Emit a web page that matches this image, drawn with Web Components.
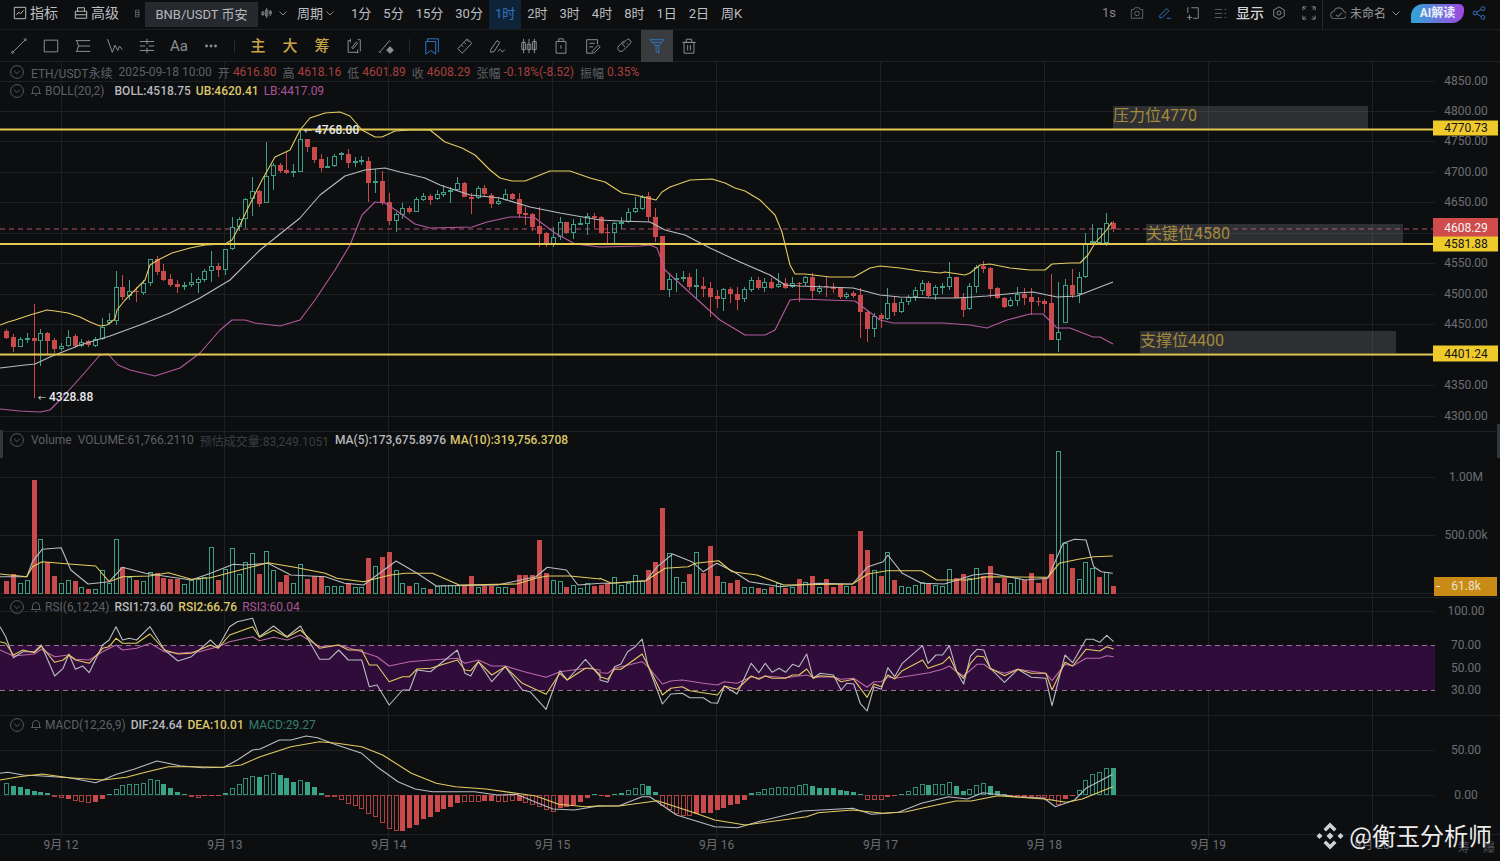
<!DOCTYPE html>
<html>
<head>
<meta charset="utf-8">
<title>ETH/USDT</title>
<style>
html, body { margin: 0; background: #0d0e10; overflow: hidden; }
</style>
</head>
<body>
<kline-app></kline-app>
<script>
var FONT = '"Roboto", "Noto Sans CJK SC", sans-serif';
var GRID = "#1e2023";
var UP = "#3f9e86";
var DOWN = "#c84a4b";
var WHITE = "#b9bcc2";
var YELLOW = "#e3cc63";
var PINK = "#b35a9f";

// candle positions, every bar is one hour
var barX = k => 6.33 + 6.83 * k;

// top, bottom, high, low in page pixels
var CANDLES = `r331,338,329,339 r337,347,334,352 g339,347,337,347 g338,340,333,343 r338,341,304,398 g333,341,329,366 r333,341,332,354 r340,349,338,353 g346,349,343,351 g337,346,330,347
r336,346,334,348 g342,346,339,347 r341,345,340,347 g339,346,337,347 g327,339,318,340 g320,323,313,325 g287,321,271,325 r287,297,275,300 g291,296,280,300 r291,292,287,302
g283,293,280,295 g259,283,259,286 r259,272,256,275 r271,280,264,281 r279,285,274,287 r284,287,280,293 g285,287,282,290 g282,285,273,287 g279,283,277,293 g271,280,269,282
g266,271,251,282 r266,270,263,277 g249,270,249,275 g227,249,217,250 g219,227,217,231 g199,219,198,228 g191,199,177,216 r191,204,190,207 g176,203,142,203 g165,176,163,190
r165,171,163,173 r170,173,152,174 g171,173,164,177 g139,172,130,172 r139,147,139,152 r147,160,147,163 r159,168,154,172 g166,167,157,168 g156,166,154,167 g153,155,152,160
r154,163,149,168 g161,162,157,167 g160,162,156,165 r161,183,157,202 g181,182,169,193 r181,203,171,205 r202,221,193,225 g214,221,212,232 g208,215,203,219 r208,212,206,214
g199,212,197,212 g196,200,193,201 r196,200,194,205 g194,199,190,200 g192,195,185,197 g190,191,187,203 g183,190,177,191 r183,197,182,197 r197,199,193,214 g188,198,186,199
r188,194,185,197 r195,204,193,208 g201,204,197,205 g194,200,189,201 r194,199,193,200 r199,214,193,218 r213,215,207,225 r214,227,213,231 r226,234,207,247 r233,243,232,247
g237,244,227,247 g222,237,217,240 r222,233,222,234 g224,233,219,239 g223,224,218,225 g216,224,213,235 r216,218,213,228 r217,233,216,234 r232,233,224,243 g223,233,222,245
g222,223,217,229 g212,222,208,223 g208,212,197,213 g197,209,195,210 r196,217,192,222 r217,237,208,242 r236,290,236,290 g279,290,273,297 g278,279,273,292 g277,278,271,282
r277,287,273,290 g285,287,269,298 r286,289,277,297 r288,297,282,317 r296,299,290,308 g289,299,288,311 r289,294,287,303 r294,300,287,310 g289,299,287,302 g280,290,277,292
r280,288,277,290 g282,288,278,292 r282,288,278,289 g284,287,273,288 r283,288,278,289 g283,287,277,288 r283,284,282,302 g277,283,276,286 r277,291,273,299 g288,292,285,294
r286,287,277,297 r287,289,283,293 r288,297,287,299 g294,297,292,299 r293,296,291,298 r295,312,288,338 r312,329,311,342 g316,329,313,337 r315,319,313,328 g303,319,288,320
r303,312,297,316 g302,312,298,313 g297,302,295,305 g290,297,287,301 g283,291,280,295 r283,296,281,297 g287,295,285,300 g286,287,283,294 g277,287,262,290 r277,298,277,298
r297,310,293,317 g286,309,283,310 g267,287,265,293 r266,269,261,273 r268,289,267,298 r288,298,287,299 r298,307,297,308 g300,306,297,307 g294,301,287,306 r294,298,288,305
r297,302,288,315 r301,302,297,306 r301,304,299,313 r303,340,274,340 g332,340,282,352 g285,323,279,323 r285,295,269,298 g277,294,272,303 g243,277,233,278 g241,243,224,245
g228,243,228,245 g223,243,213,246 r223,229,221,232`.trim().split(/\s+/);

// volume bar tops, read in crop units: minus is a falling bar
var VOLUMES = [-452,-432,460,450,-150,328,-397,-438,460,450,-453,470,-477,478,420,460,328,-412,440,-450,453,425,-430,-445,-447,-447,462,450,448,440,352,-450,418,355,432,397,368,-432,362,420,-456,-435,460,403,-447,-437,-437,467,467,467,-458,470,470,-385,408,-381,-366,420,458,-468,460,475,-477,468,464,465,465,-468,-438,470,-467,-467,470,470,-473,-435,-435,-435,-330,-430,450,453,-470,465,475,460,-467,
-465,-458,442,465,460,436,452,-420,-397,-235,370,442,455,-432,365,-430,-348,-438,455,-458,-450,470,470,-475,478,-470,458,-473,470,-447,457,-438,470,-447,-470,-462,468,-468,-303,-360,420,-437,365,-450,467,472,465,457,-460,465,467,418,-445,-432,445,415,-437,-407,-458,-445,460,445,-450,-430,-458,-447,-372,63,340,-415,448,397,415,-440,425,-467];

// macd bar tips, h is a hollow bar
var MACD = `203h 213 217 222 228 231 235 243h 248h 253 258h 260h 263h 260 252 237 222h 211h 208h 206h 204h 193h 194h 207 218 231 237 243h 248h 243 243 243 235 220h 208h 190h 184h 187 179h 175h 180 190 202 196h 201 215 234 245h 247h 255h 266h 272h 283h 296h 305h 325h 343h 347h 347 340 330 313 305 290 283 275 265 262h 260h 260h 258 258 260h 260h 258h 258 265h 270h 275h 285h 292h 278 275 270 262 250 236
243 245 238 234 226h 220h 208h 214 231 272h 285h 298h 303h 303h 296 295 293 286 280 270 267 255 234 232h 223h 220h 217h 217h 216h 211h 208h 214 218 219 220 226 229 232 238 256h 256h 256h 246 243 236 227h 216h 208h 211 208h 208h 202h 213 228 222h 210h 204h 213 228 237 242 244 245 246h 248h 250h 255h 270h 252 243 226h 196h 178h 171h 159h 159`.trim().split(/\s+/);

var BOLL_UP = [[0,325],[8,322],[15,320],[30,315],[47,310],[55,311],[68,313],[80,317],[90,322],[100,326],[107,325],[115,319],[117,310],[125,300],[135,290],[145,280],[150,265],[158,260],[172,253],[190,248],[205,245],[225,244],[232,240],[240,225],[248,208],[262,180],[275,157],[290,150],[300,130],[310,118],[325,113],[340,112],[350,116],[362,130],[375,137],[382,137],[395,131],[410,130],[430,130],[445,142],[462,148],[475,155],[490,170],[500,178],[512,181],[525,181],[540,175],[550,171],[570,171],[590,178],[605,182],[622,193],[635,195],[652,199],[656,200],[662,192],[670,187],[690,180],[712,179],[725,183],[735,188],[745,191],[760,200],[775,215],[782,232],[790,265],[795,274],[805,274],[830,277],[854,277],[870,268],[880,266],[900,268],[920,271],[940,273],[945,272],[965,275],[970,273],[980,265],[990,264],[1010,268],[1030,270],[1045,270],[1052,264],[1070,263],[1080,263],[1088,255],[1095,243],[1105,232],[1112,222]];
var BOLL_MID = [[0,368],[25,365],[35,364],[50,357],[80,345],[110,336],[140,325],[170,313],[200,298],[230,280],[260,250],[285,230],[300,218],[320,195],[345,176],[365,170],[385,168],[400,172],[425,178],[440,185],[470,195],[500,198],[530,207],[560,213],[600,220],[620,221],[650,222],[665,230],[685,235],[710,248],[740,262],[770,275],[785,285],[800,286],[853,288],[880,295],[900,297],[933,298],[957,298],[973,297],[987,296],[1017,293],[1033,292],[1057,297],[1077,296],[1100,287],[1113,282]];
var BOLL_LOW = [[0,409],[20,411],[40,412],[50,410],[60,400],[80,378],[100,355],[108,354],[118,365],[130,370],[155,376],[180,368],[200,353],[220,330],[232,320],[245,320],[255,323],[280,326],[300,320],[315,300],[335,270],[350,245],[362,215],[375,202],[385,203],[400,213],[415,224],[430,228],[472,227],[487,222],[510,217],[520,217],[535,218],[555,233],[575,244],[600,247],[640,246],[650,245],[657,248],[665,270],[700,302],[720,320],[745,335],[765,335],[775,330],[790,300],[800,299],[855,301],[880,320],[893,323],[943,323],[970,325],[987,328],[1007,320],[1030,314],[1043,314],[1057,328],[1070,328],[1093,337],[1100,337],[1113,344]];

// curves below were read from two crops, left half and right half
var crop = (left, right, top) => left.map(p => [p[0] / 2.613, top + p[1] / 3]).concat(right.map(p => [600 + p[0] / 2.613, top + p[1] / 3]));

var VOL_MA5 = crop([[0,440],[70,440],[85,395],[110,358],[160,353],[185,420],[230,462],[285,455],[320,412],[380,430],[440,440],[500,450],[550,430],[610,403],[640,405],[700,400],[760,435],[850,440],[900,460],[950,465],[1035,393],[1090,430],[1140,468],[1300,465],[1400,440],[1430,412],[1480,420],[1510,465],[1568,460]],
  [[0,460],[30,460],[120,452],[150,410],[190,372],[240,395],[270,425],[305,400],[350,425],[390,455],[470,470],[570,460],[660,462],[700,410],[740,395],[752,375],[790,430],[840,460],[900,462],[975,435],[1020,430],[1110,450],[1170,445],[1210,340],[1240,328],[1270,330],[1290,410],[1310,425],[1340,430]], 430);
var VOL_MA10 = crop([[0,432],[70,440],[85,410],[110,395],[180,402],[250,408],[285,455],[320,440],[390,438],[440,428],[500,448],[550,443],[610,425],[700,398],[770,412],[850,430],[880,445],[950,455],[1020,435],[1060,430],[1130,430],[1200,465],[1350,462],[1400,445],[1430,438],[1490,438],[1568,447]],
  [[0,445],[30,460],[120,452],[170,415],[230,410],[250,400],[310,392],[345,425],[410,435],[480,465],[660,462],[700,432],[750,422],[840,422],[880,450],[960,450],[1010,440],[1170,442],[1200,400],[1250,388],[1290,380],[1340,378]], 430);
var RSI1 = crop([[0,590],[15,620],[35,683],[60,665],[90,665],[108,645],[143,738],[165,715],[180,672],[197,718],[216,708],[233,728],[268,645],[285,630],[303,590],[320,630],[338,625],[357,630],[392,590],[430,660],[465,693],[500,680],[550,630],[570,652],[600,590],[620,575],[660,565],[678,620],[715,588],[750,620],[785,588],[835,688],[860,688],[885,660],[910,690],[945,690],[965,770],[985,765],[1017,825],[1052,780],[1070,780],[1090,720],[1125,725],[1195,660],[1215,730],[1230,738],[1250,695],[1285,755],[1320,710],[1365,780],[1385,785],[1427,838],[1463,722],[1482,750],[1530,688],[1568,740]],
  [[0,750],[20,757],[38,710],[55,702],[72,665],[92,650],[110,627],[125,705],[163,822],[185,792],[215,790],[235,803],[270,803],[290,818],[307,820],[325,768],[358,792],[395,700],[415,728],[432,700],[450,727],[468,715],[485,727],[503,703],[520,710],[540,672],[557,745],[575,730],[610,735],[630,780],[645,760],[663,762],[680,820],[698,843],[716,770],[735,778],[752,713],[770,740],[790,700],[843,647],[857,700],[878,675],[895,675],[913,647],[932,725],[950,762],[968,678],[985,658],[1003,660],[1020,715],[1057,757],[1092,718],[1127,742],[1165,745],[1181,827],[1215,675],[1235,698],[1270,628],[1288,628],[1306,637],[1324,616],[1342,635]], 430);
var RSI2 = crop([[0,635],[15,640],[35,675],[60,660],[90,668],[108,648],[143,697],[165,690],[180,675],[197,690],[233,700],[268,655],[285,650],[303,625],[320,640],[357,640],[392,612],[430,660],[465,672],[500,670],[550,645],[570,655],[600,615],[660,590],[678,622],[715,600],[750,622],[785,600],[835,655],[885,645],[910,660],[945,660],[965,705],[985,705],[1017,755],[1052,740],[1070,740],[1090,717],[1125,715],[1195,690],[1215,720],[1230,722],[1250,695],[1285,735],[1320,710],[1365,760],[1427,793],[1463,730],[1482,750],[1530,715],[1550,715],[1568,735]],
  [[0,740],[20,748],[38,718],[55,718],[110,672],[125,705],[163,795],[185,775],[215,770],[235,782],[307,795],[325,768],[358,778],[395,738],[415,748],[432,738],[450,745],[485,745],[503,735],[520,735],[540,717],[557,745],[575,737],[610,740],[630,755],[663,748],[698,802],[716,762],[735,770],[752,735],[770,747],[790,722],[843,690],[857,715],[895,700],[913,680],[932,725],[950,745],[968,700],[985,678],[1003,680],[1020,715],[1057,737],[1092,718],[1127,730],[1165,730],[1181,780],[1215,697],[1235,708],[1270,658],[1306,663],[1324,650],[1342,657]], 430);
var RSI3 = crop([[0,660],[35,678],[90,672],[108,658],[143,680],[180,675],[197,688],[233,690],[268,665],[303,645],[320,660],[357,655],[392,640],[430,665],[465,670],[520,665],[570,650],[600,635],[660,620],[678,632],[715,622],[750,630],[785,615],[835,650],[885,645],[945,665],[985,680],[1017,708],[1070,695],[1125,690],[1195,685],[1215,700],[1250,690],[1285,708],[1320,708],[1370,725],[1427,742],[1463,725],[1530,715],[1568,720]],
  [[0,728],[20,730],[38,715],[110,695],[125,710],[163,762],[185,753],[215,750],[270,760],[307,765],[325,755],[358,760],[395,740],[415,745],[432,738],[485,743],[540,735],[557,742],[610,740],[630,748],[663,745],[698,772],[716,755],[735,755],[752,740],[770,745],[860,728],[895,718],[913,708],[932,725],[950,738],[985,703],[1003,703],[1020,718],[1057,730],[1092,718],[1165,730],[1181,752],[1215,703],[1235,708],[1270,685],[1306,685],[1324,677],[1342,680]], 430);
var DIF = crop([[0,175],[20,172],[60,180],[100,182],[180,188],[250,203],[305,178],[350,163],[410,138],[470,152],[530,158],[585,157],[620,135],[660,105],[680,102],[730,75],[760,75],[800,63],[830,68],[880,90],[945,115],[985,155],[1040,200],[1085,222],[1130,230],[1170,230],[1240,230],[1300,240],[1350,238],[1400,262],[1445,282],[1500,285],[1568,272]],
  [[0,273],[50,272],[110,245],[130,245],[155,265],[200,300],[300,335],[360,338],[420,318],[530,288],[660,280],[710,298],[780,292],[840,265],[910,245],[960,252],[1000,233],[1090,245],[1160,250],[1190,275],[1240,255],[1270,220],[1340,178]], 715);
var DEA = crop([[0,195],[50,185],[110,177],[180,188],[270,195],[330,187],[380,172],[440,155],[500,155],[580,157],[630,150],[680,125],[760,95],[835,80],[880,85],[945,95],[1000,120],[1075,175],[1140,205],[1190,215],[1270,222],[1350,235],[1400,243],[1460,268],[1530,275],[1568,272]],
  [[0,273],[50,273],[150,257],[250,295],[300,315],[380,330],[540,305],[570,293],[660,285],[740,295],[800,290],[870,272],[930,258],[970,258],[1040,242],[1160,252],[1220,262],[1260,252],[1340,215]], 715);

var polyline = (pts, color) => `<polyline points="${pts.map(p => p[0].toFixed(1) + "," + p[1].toFixed(1)).join(" ")}" fill="none" stroke="${color}" stroke-width="1.1" stroke-linejoin="round"/>`;

var verticals = (top, bottom) => {
  var out = "";
  for (var i = 0; i < 9; i++) {
    var x = Math.round(60.5 + 163.9 * i) + .5;
    out += `<line x1="${x}" x2="${x}" y1="${top}" y2="${bottom}" stroke="${GRID}"/>`;
  }
  return out;
};

var hline = (y, right = 1435) => `<line x1="0" x2="${right}" y1="${y}" y2="${y}" stroke="${GRID}"/>`;
var axisText = (y, text) => `<text x="1466" y="${y + 4}" text-anchor="middle" class="axis">${text}</text>`;

// bar x is the wick pixel: a bar is 5px wide round it, outline or filled
var hollowBar = (x, top, bottom, color, extra = "") => `<rect x="${x - 1.5}" y="${Math.round(top) + .5}" width="4" height="${Math.max(Math.round(bottom) - Math.round(top) - 1, 1)}" fill="none" stroke="${color}" ${extra}/>`;
var solidBar = (x, top, bottom, color) => `<rect x="${x - 2}" y="${Math.round(top)}" width="5" height="${Math.max(Math.round(bottom) - Math.round(top), 1)}" fill="${color}"/>`;

var drawCandles = () => CANDLES.map((c, k) => {
  var up = c[0] == "g";
  var color = up ? UP : DOWN;
  var [top, bottom, high, low] = c.slice(1).split(",").map(Number);
  var x = Math.round(barX(k));
  var wick = `<line x1="${x + .5}" x2="${x + .5}" y1="${high}" y2="${top}" stroke="${color}"/><line x1="${x + .5}" x2="${x + .5}" y1="${bottom}" y2="${low}" stroke="${color}"/>`;
  return wick + (up ? hollowBar(x, top, bottom, color) : solidBar(x, top, bottom, color));
}).join("");

var drawVolumes = () => VOLUMES.map((v, k) => {
  var top = 430 + Math.abs(v) / 3;
  var x = Math.round(barX(k));
  return v > 0 ? hollowBar(x, top, 594, UP) : solidBar(x, top, 594, DOWN);
}).join("");

var drawMacd = () => MACD.map((m, k) => {
  var tip = 715 + parseInt(m) / 3;
  var top = Math.min(tip, 795), bottom = Math.max(tip, 795);
  var color = tip < 795 ? "#37a488" : DOWN;
  var x = Math.round(barX(k));
  return m.endsWith("h") ? hollowBar(x, top, bottom, color, 'opacity=".85"') : solidBar(x, top, bottom, color);
}).join("");

var priceY = p => 80.5 + (4850 - p) * 0.6098;

var tag = (y, h, bg, text, fg = "#14151a") => `<rect x="1433" y="${y - h / 2}" width="65" height="${h}" fill="${bg}"/><text x="1466" y="${y + 4}" text-anchor="middle" class="tag" fill="${fg}">${text}</text>`;

var box = (x, y, w, h, text, ty) => `<rect x="${x}" y="${y}" width="${w}" height="${h}" fill="#8a9099" opacity=".26"/><text x="${x}" y="${ty}" class="note">${text}</text>`;

var mark = (x, y, text) => `<text x="${x}" y="${y}" class="arrow">←</text><text x="${x + 11}" y="${y}" class="mark">${text}</text>`;

var mainChart = () => {
  var out = verticals(62, 432);
  for (var p = 4850; p >= 4300; p -= 50) out += hline(Math.round(priceY(p)) + .5);
  out += `<line x1="0" x2="1435" y1="229" y2="229" stroke="#b5506f" stroke-dasharray="5 4"/>`;
  out += box(1113, 106, 255, 23, "压力位4770", 121) + box(1146, 224, 257, 19, "关键位4580", 239) + box(1140, 331, 256, 22, "支撑位4400", 346);
  out += drawCandles();
  out += polyline(BOLL_UP, YELLOW) + polyline(BOLL_MID, WHITE) + polyline(BOLL_LOW, PINK);
  for (var y of [129.5, 244, 354.5]) out += `<line x1="0" x2="1435" y1="${y}" y2="${y}" stroke="#e2c853" stroke-width="2"/>`;
  out += mark(304, 134, "4768.00") + mark(38, 401, "4328.88");
  // 4600 and 4400 sit under the price tags
  for (var p = 4850; p >= 4300; p -= 50) {
    if (p != 4600 && p != 4400) out += axisText(priceY(p), p + ".00");
  }
  out += tag(128, 15, "#efca2b", "4770.73") + tag(227.5, 19, "#cf4b4c", "4608.29", "#f3f3f3") + tag(244, 15, "#efca2b", "4581.88") + tag(353.5, 16, "#efca2b", "4401.24");
  return out;
};

var volumeChart = () => {
  var out = verticals(432, 598) + hline(477.5) + hline(535.5) + hline(593.5);
  out += drawVolumes() + polyline(VOL_MA5, WHITE) + polyline(VOL_MA10, YELLOW);
  out += axisText(477, "1.00M") + axisText(535, "500.00k");
  out += `<rect x="1434" y="577" width="63" height="19" fill="#c98a16"/><line x1="1436" x2="1440" y1="586.5" y2="586.5" stroke="#e8e2cc"/><text x="1466" y="590" text-anchor="middle" class="tag" fill="#e8e2cc">61.8k</text>`;
  return out;
};

var rsiChart = () => {
  var out = verticals(598, 716) + hline(611.5);
  out += `<rect x="0" y="645" width="1435" height="45" fill="#2f0c39"/>`;
  out += `<line x1="0" x2="1435" y1="645.5" y2="645.5" stroke="#9c6f9a" stroke-dasharray="5 4"/><line x1="0" x2="1435" y1="690.5" y2="690.5" stroke="#9c6f9a" stroke-dasharray="5 4"/>`;
  out += polyline(RSI3, "#bb6aa8") + polyline(RSI1, WHITE) + polyline(RSI2, YELLOW);
  out += axisText(611, "100.00") + axisText(645, "70.00") + axisText(668, "50.00") + axisText(690, "30.00");
  return out;
};

var macdChart = () => {
  var out = verticals(716, 835) + hline(750.5) + hline(795.5);
  out += drawMacd() + polyline(DIF, WHITE) + polyline(DEA, YELLOW);
  out += axisText(750, "50.00") + axisText(795, "0.00");
  return out;
};

var PANES = {
  main: { top: 62, height: 370, legendTop: 1, draw: mainChart, legend: `
    <legend-row><span class="dim">ETH/USDT永续</span><span class="dim">2025-09-18 10:00</span><span class="dim">开</span><span class="red tight">4616.80</span><span class="dim">高</span><span class="red tight">4618.16</span><span class="dim">低</span><span class="red tight">4601.89</span><span class="dim">收</span><span class="red tight">4608.29</span><span class="dim">张幅</span><span class="red tight">-0.18%(-8.52)</span><span class="dim">振幅</span><span class="red tight">0.35%</span></legend-row>
    <legend-row bell><span class="dim">BOLL(20,2)</span><span class="w far">BOLL:4518.75</span><span class="y">UB:4620.41</span><span class="p">LB:4417.09</span></legend-row>` },
  volume: { top: 432, height: 166, legendTop: -1, draw: volumeChart, legend: `
    <legend-row><span class="dim">Volume</span><span class="dim">VOLUME:61,766.2110</span><span class="dimmer">预估成交量:83,249.1051</span><span class="w">MA(5):173,675.8976</span><span class="y near">MA(10):319,756.3708</span></legend-row>` },
  rsi: { top: 598, height: 118, legendTop: 0, draw: rsiChart, legend: `
    <legend-row bell><span class="dim">RSI(6,12,24)</span><span class="w">RSI1:73.60</span><span class="y">RSI2:66.76</span><span class="p">RSI3:60.04</span></legend-row>` },
  macd: { top: 716, height: 119, legendTop: 0, draw: macdChart, legend: `
    <legend-row bell><span class="dim">MACD(12,26,9)</span><span class="w">DIF:24.64</span><span class="y">DEA:10.01</span><span class="g">MACD:29.27</span></legend-row>` }
};

class LegendRow extends HTMLElement {
  constructor() {
    super();
    var root = this.attachShadow({ mode: "open" });
    var bell = this.hasAttribute("bell");
    root.innerHTML = `
      <style>
      :host { display: flex; align-items: center; height: 18px; padding-left: 10px; font: 12px ${FONT}; white-space: nowrap; }
      .fold { width: 14px; height: 14px; flex: none; }
      .bell { width: 12px; height: 12px; flex: none; margin-left: 6px; }
      .items { display: flex; align-items: center; gap: ${bell ? 5 : 6}px; margin-left: ${bell ? 3 : 7}px; }
      </style>
      <svg class="fold" viewBox="0 0 14 14" fill="none" stroke="#565a60"><circle cx="7" cy="7" r="6.4"/><path d="M4.2 5.8 7 8.6l2.8-2.800"/></svg>
      ${bell ? `<svg class="bell" viewBox="0 0 12 12" fill="none" stroke="#565a60"><path d="M2.500 8.500V5a3.500 3.500 0 0 1 7 0v3.500M1 8.500h10M5 10.500h2"/></svg>` : ""}
      <div class="items"><slot></slot></div>`;
  }
}
customElements.define("legend-row", LegendRow);

class ChartPane extends HTMLElement {
  constructor() {
    super();
    this.attachShadow({ mode: "open" });
  }

  connectedCallback() {
    var pane = PANES[this.getAttribute("kind")];
    this.shadowRoot.innerHTML = `
      <style>
      :host { display: block; position: relative; height: ${pane.height}px; box-shadow: inset 0 -1px 0 ${GRID}; }
      svg { display: block; width: 1500px; height: ${pane.height}px; }
      .axis { font: 12px ${FONT}; fill: #6b6f75; }
      .tag { font: 12px ${FONT}; }
      .note { font: 16px ${FONT}; fill: #a38a3c; }
      .mark { font: 500 12px ${FONT}; fill: #e8e9ea; }
      .arrow { font: 8px ${FONT}; fill: #e8e9ea; }
      .legend { position: absolute; left: 0; top: ${pane.legendTop}px; display: grid; gap: 1px; }
      .dim { color: #5d6167; }
      .dimmer { color: #3b3e42; }
      .red { color: #a8403f; }
      .tight { margin-left: -3px; }
      .far { margin-left: 5px; }
      .near { margin-left: -2px; }
      .w { color: #b6b9bd; font-weight: 500; }
      .y { color: #dcc76a; font-weight: 500; }
      .p { color: #a9549a; }
      .g { color: #357f6c; }
      </style>
      <svg viewBox="0 ${pane.top} 1500 ${pane.height}">${pane.draw()}</svg>
      <div class="legend">${pane.legend}</div>`;
  }
}
customElements.define("chart-pane", ChartPane);

class TimeAxis extends HTMLElement {
  constructor() {
    super();
    var root = this.attachShadow({ mode: "open" });
    var days = [12, 13, 14, 15, 16, 17, 18, 19, 20];
    root.innerHTML = `
      <style>
      :host { display: block; position: relative; height: 26px; font: 12px ${FONT}; color: #6b6f75; }
      svg { display: block; width: 1500px; height: 26px; }
      text { font: 12px ${FONT}; fill: #6b6f75; }
      .edge { position: absolute; right: 5px; top: 3px; display: flex; gap: 13px; color: #4c4f54; }
      </style>
      <svg viewBox="0 835 1500 26">${verticals(835, 838)}${days.map((d, i) => `<text x="${61 + 163.9 * i}" y="849" text-anchor="middle">9月 ${d}</text>`).join("")}</svg>
      <div class="edge"><span>筹</span><span>爆</span></div>`;
  }
}
customElements.define("time-axis", TimeAxis);

var ICON = {
  indicator: `<rect x="1.500" y="1.500" width="13" height="13"/><path d="m4 10 2.500-3 2 2L12 5"/>`,
  advanced: `<path d="M1.500 6h13v8h-13zM4 6V2h8v4M1.500 10h13"/>`,
  layers: `<path d="M1 2h6v12H1zM1 6h6M1 10h6"/>`,
  bars: `<path d="M2.500 5v7M7.500 1v14M12.500 4v8"/><path d="M1 7h3v3H1zM6 4h3v8H6zM11 6h3v3h-3z"/>`,
  camera: `<path d="M1.500 4h3l1-2h5l1 2h3v10h-13z"/><circle cx="8" cy="8.500" r="2.600"/>`,
  pencil: `<path d="m2 11 8-8 2.500 2.500-8 8H2zM10 14h5"/>`,
  addbox: `<path d="M6 2h8v12H8M2 8V2h1M1 13h6M4 10v6"/>`,
  list: `<path d="M1 3h9M1 8h9M1 13h9M13 3h2M13 8h2M13 13h2"/>`,
  hexgear: `<path d="m8 1 6 3.500v7L8 15l-6-3.500v-7z"/><circle cx="8" cy="8" r="2.300"/>`,
  full: `<path d="M1 5V1h4M11 1h4v4M15 11v4h-4M5 15H1v-4M1 1l3 3M15 1l-3 3M15 15l-3-3M1 15l3-3"/>`,
  cloud: `<path d="M4.500 13.500a3.500 3.500 0 0 1-.5-7A5 5 0 0 1 13.500 6.200a3.700 3.700 0 0 1-.5 7.300zM6 10l2 1.500 4-3.500"/>`,
  share: `<circle cx="3.500" cy="8" r="2.200"/><circle cx="12.500" cy="3" r="2.200"/><circle cx="12.500" cy="13" r="2.200"/><path d="m5.500 7 5-3M5.500 9l5 3"/>`,
  line: `<path d="m3 17 14-14"/><circle cx="3" cy="17" r="1.200"/><circle cx="17" cy="3" r="1.200"/>`,
  rect: `<rect x="2.500" y="3.500" width="15" height="13"/>`,
  levels: `<path d="M2 4h16M5 10h13M2 16h16M3 4l2 6-2 6"/>`,
  wave: `<path d="M2 3l5 14 3-8 3 6 2-5 3 4M2 3H1"/>`,
  fib: `<path d="M2 5h16M2 15h16M2 10h6M12 10h6M10 2v6M10 12v6"/>`,
  dots: `<g fill="currentColor" stroke="none"><circle cx="5" cy="10" r="1.600"/><circle cx="10" cy="10" r="1.600"/><circle cx="15" cy="10" r="1.600"/></g>`,
  sync: `<path d="M6 4H3.500v13H15M14 3h3v13M9 13l5-6-1.500-1.500L7.500 12zM6 2v4M14 14v4"/>`,
  brush: `<path d="M3 17 14 4M15 5l-1-1M2 16l2 2"/><rect x="12" y="12" width="5" height="5" fill="currentColor" transform="rotate(45 14.500 14.500)"/>`,
  book: `<path d="M4 5V2h12v15M2 5h11v14l-5.500-4L2 19z"/>`,
  ruler: `<path d="m12.500 2 5 5L7 18l-5-5zM6 9l2 2M9 6l2 2M12 3.500l2 2"/>`,
  pen: `<path d="m3 14 7-10 3 2-6 10-4 1zM11 16c2-3 3-3 3.500-1s2 2 4-1"/>`,
  candles: `<path d="M4 2v16M10 2v16M16 2v16"/><path d="M2 6h4v8H2zM8 8h4v6H8zM14 5h4v9h-4z"/>`,
  timer: `<path d="M4.500 5h11v13h-11zM7.500 5V2h5v3M10 9v4"/>`,
  note: `<path d="M15 8V3H3v15h7M6 7h6M6 11h4M11 18l7-7-2-2-7 7z"/>`,
  magnet: `<path d="M7 8l5-5c2-2 6 2 4 4l-8 8c-3 3-8-1-5-5l6-6M10 11l-3-3M13 8l-1-1"/>`,
  filter: `<path d="M2 3h16l-6 7v8l-3-2v-6z"/><path d="M5 6h10M8 9.500h4"/>`,
  trash: `<path d="M4.500 6h11v12h-11zM2.500 6h15M7 6V2.500h6V6M8.500 9v6M11.500 9v6"/>`
};

var icon = (name, size, color, box = 16) => `<svg width="${size}" height="${size}" viewBox="0 0 ${box} ${box}" fill="none" stroke="${color}" stroke-width="1.1" stroke-linejoin="round" style="flex:none;display:block;color:${color}">${ICON[name]}</svg>`;
var chevron = `<svg width="8" height="5" viewBox="0 0 8 5" fill="none" stroke="#85888d" style="flex:none;display:block"><path d="m.5.5 3.500 3.500 3.500-3.500"/></svg>`;

class TopBar extends HTMLElement {
  constructor() {
    super();
    var root = this.attachShadow({ mode: "open" });
    var periods = ["1分", "5分", "15分", "30分", "1时", "2时", "3时", "4时", "8时", "1日", "2日", "周K"];
    root.innerHTML = `
      <style>
      :host { display: flex; align-items: center; height: 30px; position: relative; padding: 0 14px 4px 13px; box-shadow: inset 0 -1px 0 #1b1d20; font: 14px ${FONT}; color: #bdbfc2; white-space: nowrap; box-sizing: border-box; }
      span { position: relative; top: -1px; }
      .item { display: flex; align-items: center; gap: 3px; }
      .small { font-size: 13px; }
      .periods { display: flex; gap: 12px; margin-left: 17px; font-size: 13px; }
      .on { color: #2f76c4; z-index: 0; }
      .on::before { content: ""; position: absolute; z-index: -1; left: -6px; right: -6px; top: -4px; bottom: -7px; background: #0f2338; }
      .tip { position: absolute; left: 145px; top: 2px; width: 113px; height: 25px; line-height: 25px; text-align: center; background: #26292d; color: #b5b8bd; font-size: 13px; }
      .right { margin-left: auto; display: flex; align-items: center; }
      .tools { display: flex; align-items: center; gap: 14px; }
      .sep { width: 1px; height: 30px; background: #24262a; margin: 4px 7px 0 6px; }
      .ai { margin-left: 11px; width: 53px; height: 19px; line-height: 19px; text-align: center; font-size: 12px; font-weight: 700; color: #e8eef8; border-radius: 12px 5px 12px 1px; background: linear-gradient(90deg, #2fa7d6, #a146e0); }
      </style>
      <div class="item">${icon("indicator", 14, "#bdbfc2")}<span>指标</span></div>
      <div class="item" style="margin-left:16px">${icon("advanced", 14, "#bdbfc2")}<span>高级</span></div>
      <div class="item" style="margin-left:16px;width:126px">${icon("layers", 9, "#85888d")}</div>
      <div class="item" style="gap:6px">${icon("bars", 12, "#85888d")}${chevron}</div>
      <div class="item small" style="margin-left:10px"><span>周期</span>${chevron}</div>
      <div class="periods">${periods.map(p => `<span class="${p == "1时" ? "on" : ""}">${p}</span>`).join("")}</div>
      <div class="right">
        <div class="tools" style="color:#85888d">
          <span style="font-size:13px">1s</span>
          ${icon("camera", 14, "#62656a")}
          ${icon("pencil", 14, "#2f76c4")}
          ${icon("addbox", 14, "#85888d")}
          ${icon("list", 13, "#62656a")}
        </div>
        <span style="margin-left:9px;font-weight:500;color:#d5d6d8">显示</span>
        <div style="margin-left:8px">${icon("hexgear", 14, "#85888d")}</div>
        <div style="margin-left:16px">${icon("full", 14, "#85888d")}</div>
        <div class="sep"></div>
        ${icon("cloud", 16, "#62656a")}
        <span style="margin:0 6px 0 4px;font-size:12px;color:#9a9da1">未命名</span>
        ${chevron}
        <div class="ai">AI解读</div>
        <div style="margin-left:8px">${icon("share", 14, "#2f76c4")}</div>
      </div>
      <div class="tip">BNB/USDT 币安</div>`;
  }
}
customElements.define("top-bar", TopBar);

class DrawBar extends HTMLElement {
  constructor() {
    super();
    var root = this.attachShadow({ mode: "open" });
    var G = "#8b8e93", B = "#2f76c4";
    var cell = (inner, cls = "") => `<div class="cell ${cls}">${inner}</div>`;
    var pic = (name, color) => cell(icon(name, 18, color, 20));
    root.innerHTML = `
      <style>
      :host { display: flex; align-items: center; height: 32px; padding-left: 3px; box-shadow: inset 0 -1px 0 ${GRID}; font: 15px ${FONT}; color: ${G}; box-sizing: border-box; }
      .cell { width: 32px; height: 32px; display: flex; align-items: center; justify-content: center; flex: none; box-sizing: border-box; }
      .gold { color: #c8a548; font-weight: 500; padding-bottom: 3px; }
      .on { background: #393b3f; }
      .sep { width: 1px; height: 14px; background: #26282b; margin: 0 7px 0 7px; flex: none; }
      </style>
      ${pic("line", G)}${pic("rect", G)}${pic("levels", G)}${pic("wave", G)}${pic("fib", G)}
      ${cell("Aa")}${pic("dots", G)}
      <div class="sep"></div>
      ${cell("主", "gold")}${cell("大", "gold")}${cell("筹", "gold")}${pic("sync", G)}${pic("brush", G)}
      <div class="sep"></div>
      ${pic("book", B)}${pic("ruler", G)}${pic("pen", G)}${pic("candles", G)}${pic("timer", G)}${pic("note", G)}${pic("magnet", G)}
      ${cell(icon("filter", 18, B, 20), "on")}
      ${pic("trash", G)}`;
  }
}
customElements.define("draw-bar", DrawBar);

class WaterMark extends HTMLElement {
  constructor() {
    super();
    var root = this.attachShadow({ mode: "open" });
    root.innerHTML = `
      <style>
      :host { position: absolute; right: 8px; bottom: 9px; display: flex; align-items: center; gap: 5px; font: 24px "Noto Sans CJK SC", ${FONT}; line-height: 34px; color: #ececec; white-space: nowrap; }
      svg { position: relative; top: 1px; }
      </style>
      <svg width="28" height="28" viewBox="0 0 28 28" fill="#cfd0d2">
        <path d="M14 .5 20.500 7 18 9.500l-4-4-4 4L7.500 7zM14 27.500 7.500 21l2.500-2.500 4 4 4-4 2.500 2.500zM3.500 11 6.500 14l-3 3-3-3zM24.500 11l3 3-3 3-3-3zM14 10.500l3.500 3.500-3.500 3.500-3.500-3.500z"/>
      </svg>
      <span>@衡玉分析师</span>`;
  }
}
customElements.define("water-mark", WaterMark);

class KlineApp extends HTMLElement {
  constructor() {
    super();
    var root = this.attachShadow({ mode: "open" });
    root.innerHTML = `
      <style>
      :host { display: block; position: relative; width: 1500px; height: 861px; overflow: hidden; background: #0d0e10; }
      .handle { position: absolute; width: 3px; background: #33363a; }
      </style>
      <top-bar></top-bar>
      <draw-bar></draw-bar>
      <chart-pane kind="main"></chart-pane>
      <chart-pane kind="volume"></chart-pane>
      <chart-pane kind="rsi"></chart-pane>
      <chart-pane kind="macd"></chart-pane>
      <time-axis></time-axis>
      <div class="handle" style="left:0;top:430px;height:28px"></div>
      <div class="handle" style="right:0;top:424px;height:34px"></div>
      <water-mark></water-mark>`;
  }
}
customElements.define("kline-app", KlineApp);
</script>
</body>
</html>
